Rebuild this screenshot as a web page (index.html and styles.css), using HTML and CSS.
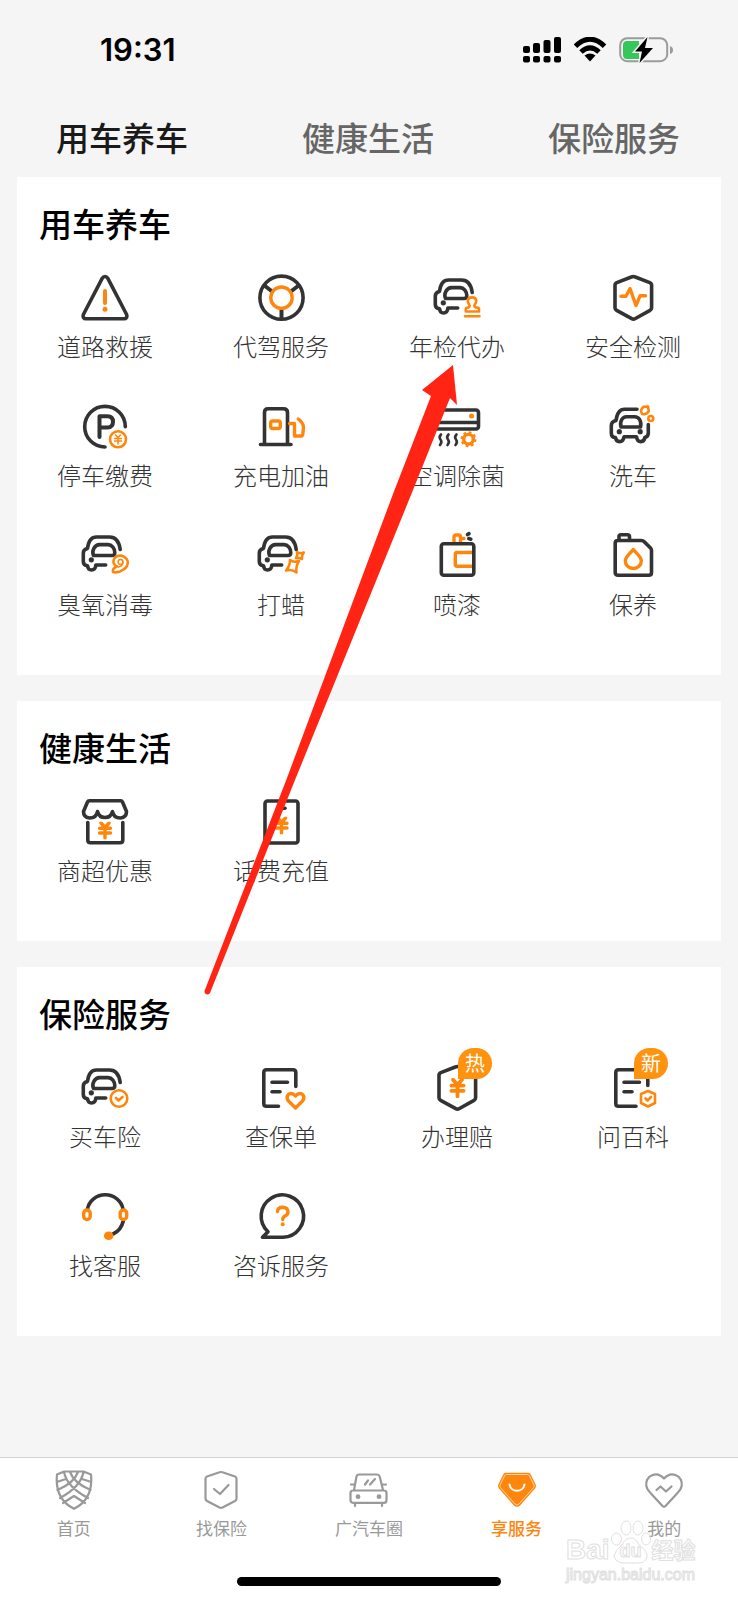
FILE: index.html
```html
<!DOCTYPE html>
<html lang="zh-CN">
<head>
<meta charset="utf-8">
<meta name="viewport" content="width=device-width, initial-scale=1">
<title>享服务</title>
<link rel="stylesheet" href="styles.css">
</head>
<body>
<svg class="defs" aria-hidden="true">
  <symbol id="car" viewBox="0 0 48 48">
    <path class="d" d="M39.2 18.4C38.2 11 34.500 6 28.500 6H15.500C9.500 6 7.300 11 6.500 17.400C3.800 18 2.300 19.500 2.300 22V30.500C2.300 33 4 34.500 6.500 34.700C6.800 37.800 8.500 39 10.500 39C13.200 39 14.600 37.200 14.800 34H24.700"/>
    <path class="d" d="M12.500 24.500C10.500 20 13.500 13.600 18.500 13.600H27C31 13.600 33.800 17.500 33.800 21.500C33.800 23.500 32.800 24.500 31 24.500Z"/>
    <circle class="df" cx="10.300" cy="28.800" r="2.600"/>
  </symbol>
  <symbol id="hex" viewBox="0 0 48 48">
    <path class="d" d="M22.300 3a5 5 0 0 1 4 0L40.800 8.600c1.200.5 1.800 1.300 1.800 2.600v22.600c0 1.200-.5 2-1.600 2.600L26 44.700c-1 .6-2.200.6-3.200 0L7.600 36.400C6.500 35.800 6 35 6 33.800V11.200C6 9.900 6.600 9.100 7.800 8.600z"/>
  </symbol>
  <symbol id="yen" viewBox="0 0 14 18">
    <path class="o" d="M3 1.500L7 6L11 1.500M1.500 6.800H12.500M1.500 11.500H12.500M7 6V16.500"/>
  </symbol>
</svg>

<div class="page">
  <header>
    <div class="status">
      <time class="clock">19:31</time>
      <div class="indicators">
        <svg class="signal" width="38" height="26" viewBox="0 0 38 26" aria-hidden="true">
          <rect x="0" y="9" width="7" height="7" rx="2"/><rect x="10" y="6" width="7" height="10" rx="2"/><rect x="20.500" y="3" width="7" height="13" rx="2"/><rect x="31" y="0" width="7" height="16" rx="2"/>
          <rect x="0" y="19" width="7" height="6.500" rx="2"/><rect x="10" y="19" width="7" height="6.500" rx="2"/><rect x="20.500" y="19" width="7" height="6.500" rx="2"/><rect x="31" y="19" width="7" height="6.500" rx="2"/>
        </svg>
        <svg class="wifi" width="34" height="26" viewBox="0 0 34 26" aria-hidden="true">
          <path d="M2.500 9.200Q17-4.800 31.500 9.200M8 15Q17 6.600 26 15" fill="none" stroke="#000" stroke-width="5"/>
          <path d="M11.500 18.500Q17 14.300 22.500 18.500L17 24.500Z"/>
        </svg>
        <svg class="battery" width="55" height="26" viewBox="0 0 55 26" aria-hidden="true">
          <rect x="1.200" y="1.200" width="47" height="23" rx="7" fill="none" stroke="#9b9b9b" stroke-width="2"/>
          <path d="M51 9q3 1 3 4t-3 4z" fill="#9b9b9b"/>
          <path d="M8 4H20V22H8Q4 22 4 18V8Q4 4 8 4Z" fill="#34c759"/>
          <path d="M28.500 0L16 14.500H23L20.500 26L34 11H26Z" stroke="#f5f5f5" stroke-width="3" paint-order="stroke"/>
        </svg>
      </div>
    </div>
    <nav class="tabs" aria-label="服务分类">
      <button class="tab tab-active" type="button">用车养车</button>
      <button class="tab" type="button">健康生活</button>
      <button class="tab" type="button">保险服务</button>
    </nav>
  </header>

  <main>
    <section class="card">
      <h2>用车养车</h2>
      <div class="grid">
        <a class="item" href="#"><svg class="icon" viewBox="0 0 48 48"><path class="d" d="M21.300 4.200c1.300-2.200 4.100-2.200 5.400 0L45.600 40.500c1 2.200-.2 4.300-2.600 4.300H5c-2.400 0-3.600-2.100-2.600-4.300z"/><path class="o thick" d="M24 17V29"/><circle class="of" cx="24" cy="35.300" r="2.500"/></svg><span>道路救援</span></a>
        <a class="item" href="#"><svg class="icon" viewBox="0 0 48 48"><circle class="d" cx="24.500" cy="23.700" r="21.600"/><path class="d thick" d="M8 12L14.500 17M41 12L34.500 17M24.500 36V44"/><circle class="o" cx="24.500" cy="23.700" r="10.700"/></svg><span>代驾服务</span></a>
        <a class="item" href="#"><svg class="icon" viewBox="0 0 48 48"><use href="#car"/><path class="o thin" d="M32.800 37.500V35.500Q32.800 33.500 34.800 33.500H35.500C38.500 32 34.800 29.800 34.800 27.200C34.800 24.800 36.500 23.400 39 23.400S43.200 24.800 43.200 27.200C43.200 29.800 39.500 32 42.500 33.500H44Q46 33.500 46 35.500V37.500ZM32 42.300H46.500"/></svg><span>年检代办</span></a>
        <a class="item" href="#"><svg class="icon" viewBox="0 0 48 48"><use href="#hex"/><path class="o" d="M12 22.300H17L21 14.500L27 31.500L31 21.800H36.500"/></svg><span>安全检测</span></a>

        <a class="item" href="#"><svg class="icon" viewBox="0 0 48 48"><path class="d" d="M44.300 23.700A20.300 20.300 0 1 0 24 44"/><path class="d thick" d="M18.500 34V13.200H26.500Q32 13.200 32 18.800T26.500 24.400H19"/><circle class="o thin" cx="37" cy="36.300" r="8"/><path class="o hair" d="M34.500 32L37 34.500L39.500 32M33.500 35.500H40.500M33.500 38H40.500M37 34.500V41"/></svg><span>停车缴费</span></a>
        <a class="item" href="#"><svg class="icon" viewBox="0 0 48 48"><path class="d" d="M7.500 41V9.500Q7.500 5.800 11 5.800H26.500Q30.500 5.800 30.500 9.500V41M3.500 41.500H34"/><rect class="o" x="13.700" y="18" width="9.600" height="7.500" rx="2"/><path class="o" d="M32.500 20.500H37.500V33H44.500Q45.500 33 45.800 31L46.500 24.500Q46.500 20 41.300 16"/></svg><span>充电加油</span></a>
        <a class="item" href="#"><svg class="icon" viewBox="0 0 48 48"><rect class="d" x="2.500" y="7" width="43" height="19" rx="2.500"/><path class="d" d="M3 19.500H45"/><circle class="of" cx="38.500" cy="13" r="2.500"/><path class="d thin" d="M8 31.500Q5.500 34 7.500 36.500T7 42M15.500 31.500Q13 34 15 36.500T14.500 42M23.500 31.500Q21 34 23 36.500T22.500 42"/><circle class="o" cx="35.500" cy="36.200" r="4.800"/><circle class="o dots" cx="35.500" cy="36.200" r="6.800"/></svg><span>空调除菌</span></a>
        <a class="item" href="#"><svg class="icon" viewBox="0 0 48 48"><path class="d" d="M28 6.200H15.500C9.500 6.200 7.800 11.500 7 17.500C3.700 18.500 2.300 20 2.300 22.500V30C2.300 33 3.800 34.500 6.500 34.500C6.800 37.500 8.300 38.600 10.500 38.600C13.200 38.600 14.500 37 15 33.700H27.500C28 37 29.300 38.600 31.800 38.600C34 38.600 35.500 37.500 35.800 34.500C38.300 34 39.300 32.500 39.300 30V21.500"/><path class="d" d="M12 24C10.500 18 13.500 13.700 17.500 13.700H25.500C30 13.700 32.800 18 31.500 24Z"/><circle class="df" cx="10.300" cy="28.700" r="2.600"/><circle class="df" cx="31.200" cy="28.700" r="2.600"/><path class="o thin" d="M34.500 3.800L39 3.500L39.800 8.300Q37 12.500 33 10.800Q30.500 7.500 34.500 3.800Z"/><circle class="o thin" cx="41.800" cy="15.500" r="2.500"/></svg><span>洗车</span></a>

        <a class="item" href="#"><svg class="icon" viewBox="0 0 48 48"><use href="#car" y="-1"/><path class="o thin" d="M32 40Q31 36.500 36 34.500Q32 32.500 32.500 28.500Q34 23.500 40 23.500Q45.500 25 46.800 29.500Q47 35 42.500 37.500Q37 41.500 32 40Z"/><circle class="o hair" cx="39.500" cy="30" r="2.400"/><path class="o hair" d="M42 30Q42 34 37.500 35"/></svg><span>臭氧消毒</span></a>
        <a class="item" href="#"><svg class="icon" viewBox="0 0 48 48"><use href="#car" y="-1"/><path class="o thin" d="M33 28Q36.500 31 42 29Q38.500 34.500 39.500 40.500Q35 37 29 38.500Q33 34 33 28Z"/><path class="o thin" d="M40 20Q43 22 46.800 20.500Q44.500 23.500 45 27Q42 25.500 39 26Q41 23.500 40 20Z"/></svg><span>打蜡</span></a>
        <a class="item" href="#"><svg class="icon" viewBox="0 0 48 48"><path class="o" d="M21 10V5Q21 3 23 3H25.500Q27.500 3 27.500 5V10M28.500 6.500H31"/><path class="o" d="M40 20.500H24Q22.300 20.500 22.300 22.500V32.500Q22.300 34.200 24 34.200H40"/><rect class="d" x="8.300" y="11.700" width="32.500" height="31.500" rx="2.500"/><path class="d" d="M34.500 2.500L36 1.600M35.800 6.500L37.800 7.200"/></svg><span>喷漆</span></a>
        <a class="item" href="#"><svg class="icon" viewBox="0 0 48 48"><path class="d" d="M9 8.500H32.500Q34 8.500 35 9.500L41.500 16Q42.500 17 42.500 18.500V40.500Q42.500 43.300 39.700 43.300H9Q6.200 43.300 6.200 40.500V11Q6.200 8.500 9 8.500ZM10 8V4.500Q10 2.700 12 2.700H18.500Q20.500 2.700 20.500 4.500V8"/><path class="o" d="M24.300 17.500C26.500 20.500 32.300 24.500 32.300 29A8 7.500 0 0 1 16.300 29C16.300 24.500 22 20.500 24.300 17.500Z"/></svg><span>保养</span></a>
      </div>
    </section>

    <section class="card">
      <h2>健康生活</h2>
      <div class="grid">
        <a class="item" href="#"><svg class="icon" viewBox="0 0 48 48"><path class="d" d="M8.500 2.800H39.500Q41 2.800 41.500 4L45.500 13.500Q45.500 19.500 39.500 20Q32.500 20 31.500 13.500Q30 19.500 24 19.500T16.500 13.500Q15.500 20 8.500 20Q2.500 19.500 2.500 13.500L6.500 4Q7 2.800 8.500 2.800Z"/><path class="d" d="M6.800 24.500V42Q6.800 44.800 9.500 44.800H39Q41.800 44.800 41.800 42V24.500"/><use href="#yen" x="16.500" y="23.500" width="15" height="18"/></svg><span>商超优惠</span></a>
        <a class="item" href="#"><svg class="icon" viewBox="0 0 48 48"><rect class="d" x="8" y="3" width="33" height="42" rx="2.500"/><path class="d" d="M21.500 10.300H28"/><use href="#yen" x="17" y="18.500" width="15" height="18"/></svg><span>话费充值</span></a>
      </div>
    </section>

    <section class="card">
      <h2>保险服务</h2>
      <div class="grid">
        <a class="item" href="#"><svg class="icon" viewBox="0 0 48 48"><use href="#car"/><circle class="o thin" cx="38" cy="34.500" r="8.300"/><path class="o thin" d="M35 34L37.500 36.500L41.500 33"/></svg><span>买车险</span></a>
        <a class="item" href="#"><svg class="icon" viewBox="0 0 48 48"><path class="d" d="M38.800 22.500V8.500Q38.800 5.800 36 5.800H9.500Q6.800 5.800 6.800 8.500V39.500Q6.800 42.300 9.500 42.300H21.500M15 18.300H30.500M15 27.700H23"/><path class="o" d="M38.500 44L31.500 37Q28.500 33 32 30Q35.500 28.500 38.500 32Q41.500 28.500 45 30Q48.500 33 45.500 37Z"/></svg><span>查保单</span></a>
        <a class="item" href="#"><svg class="icon" viewBox="0 0 48 48"><use href="#hex"/><use href="#yen" x="16" y="14" width="17" height="20"/></svg><b class="badge">热</b><span>办理赔</span></a>
        <a class="item" href="#"><svg class="icon" viewBox="0 0 48 48"><path class="d" d="M38.800 21.500V8.500Q38.800 5.800 36 5.800H9.500Q6.800 5.800 6.800 8.500V39.500Q6.800 42.300 9.500 42.300H27M15 18.300H30.500M15 27.700H23"/><path class="o thin" d="M39 27L46 30V39L39 42.500L32 39V30Z"/><path class="o thin" d="M36.500 34.500L38.500 36.500L42 33"/></svg><b class="badge">新</b><span>问百科</span></a>

        <a class="item" href="#"><svg class="icon" viewBox="0 0 48 48"><path class="d" d="M6.500 16A18 17 0 0 1 42 16M42.300 28Q40 37.500 32 41"/><rect class="o" x="2.700" y="17" width="6.500" height="9.500" rx="3.200"/><rect class="o" x="39.200" y="17" width="6.500" height="9.500" rx="3.200"/><ellipse class="of" cx="27.700" cy="42.700" rx="4.800" ry="4.300"/></svg><span>找客服</span></a>
        <a class="item" href="#"><svg class="icon" viewBox="0 0 48 48"><path class="d" d="M26 44.300A21.200 21.200 0 1 0 11 38.700L5.500 44.300Z"/><path class="o" d="M20.500 18.500Q20.800 14.300 25.700 14.300T31 19Q31 21.500 28 23Q25.700 24.300 25.700 26.500"/><circle class="of" cx="25.700" cy="31.300" r="2"/></svg><span>咨诉服务</span></a>
      </div>
    </section>
  </main>

  <footer>
    <nav class="bottom-nav" aria-label="主导航">
      <a class="nav-item" href="#"><svg class="nav-icon" viewBox="0 0 40 40"><path class="n" d="M10 1.500H29.500L37 4.500Q39.500 29 20 38.800Q.5 29 3 4.500ZM10 2Q13 17 34 28M29.500 2Q26.500 17 6 28M16 2Q20 13 36.500 20M24 2Q20 13 3.500 20M12 9L2.800 12M28 9L37.200 12M9 33L20 26L31 33"/></svg><span>首页</span></a>
      <a class="nav-item" href="#"><svg class="nav-icon" viewBox="0 0 40 40"><path class="n" d="M18.500 2.300Q20 1.700 21.500 2.300L34 6.500Q35.500 7 35.500 8.500V28.500Q35.500 30 34 31L21.500 37.500Q20 38.200 18.500 37.500L6 31Q4.500 30 4.500 28.500V8.500Q4.500 7 6 6.500ZM13 19L19 24L27.500 15"/></svg><span>找保险</span></a>
      <a class="nav-item" href="#"><svg class="nav-icon" viewBox="0 0 40 40"><path class="n" d="M5 20L7.500 6.500Q8 4.500 10 4.500H28Q30 4.500 30.700 6.500L34 20M4 20.500H35Q37.500 20.500 37.500 23V30Q37.500 32.800 35 32.800H4Q1.500 32.800 1.500 30V23Q1.500 20.500 4 20.500ZM2 14.500H5M34 14.500H37M6 33V36M33 33V36M16 14.500L19 10.500M21 14.500L26 9"/><circle class="nf" cx="9" cy="26.700" r="2.400"/><circle class="nf" cx="30" cy="26.700" r="2.400"/></svg><span>广汽车圈</span></a>
      <a class="nav-item nav-active" href="#"><svg class="nav-icon" viewBox="0 0 40 40"><path fill="#ff860d" d="M9 2.700H31Q32.500 2.700 33.500 4L38.700 14.500Q39.500 16.500 38 18.500L23 35.500Q20 38 17 35.500L2 18.500Q.5 16.500 1.300 14.500L6.500 4Q7.500 2.700 9 2.700Z"/><path d="M9.500 4.500H30.500Q31.700 4.500 32.300 5.500L37 15Q37.500 16.500 36.500 17.700L22 34Q20 35.700 18 34L3.500 17.700Q2.500 16.500 3 15L7.700 5.500Q8.300 4.500 9.500 4.500Z" fill="none" stroke="#ffd3a4"/><path d="M12.500 14.500A7.600 7.600 0 0 0 27.500 14.500" fill="none" stroke="#fff" stroke-width="2" stroke-linecap="round"/></svg><span>享服务</span></a>
      <a class="nav-item" href="#"><svg class="nav-icon" viewBox="0 0 40 40"><path class="n" d="M20 8.500Q14.500 2.500 8.500 5Q1.500 8 2.300 16Q3 19.500 6.500 23L18.500 36Q20 37.500 21.500 36L33.500 23Q37 19.500 37.700 16Q38.500 8 31.500 5Q25.500 2.500 20 8.500ZM12.500 20L16.500 16.500L22 21.500L27.500 16.500"/></svg><span>我的</span></a>
    </nav>
    <div class="home-bar"></div>
  </footer>

  <div class="watermark" aria-hidden="true">
    <div class="wm-brand">
      <span class="wm-latin">Bai</span>
      <span class="wm-paw"><svg width="42" height="44" viewBox="0 0 42 44"><ellipse cx="6.500" cy="19" rx="5" ry="6"/><ellipse cx="16" cy="8" rx="5" ry="7"/><ellipse cx="28" cy="8" rx="5" ry="7"/><ellipse cx="36" cy="19" rx="4.500" ry="6"/><path d="M21 18Q26 18 29 25Q38 31 37 37Q35 43 29 43H13Q5 42 4 36Q5 30 12 25Q15 18 21 18Z"/></svg><i>du</i></span>
      <span class="wm-cn">经验</span>
    </div>
    <div class="wm-url">jingyan.baidu.com</div>
  </div>

  <svg class="arrow" width="260" height="634" viewBox="0 0 260 634" aria-hidden="true">
    <path d="M249 2L253 42L246 35L207 132L91 417L6 630A3 3 0 0 1 0.500 628L83 415L189 131L227 33L218 27Z"/>
  </svg>
</div>
</body>
</html>
```
FILE: styles.css
```css
* { box-sizing: border-box; }

body {
  margin: 0;
  background: #f5f5f5;
  color: #000;
  font-family: "Noto Sans CJK SC", sans-serif;
}

a { color: inherit; text-decoration: none; }

.defs { position: absolute; width: 0; height: 0; }

.page {
  position: relative;
  display: flex;
  flex-direction: column;
  min-height: 100vh;
}

/* Status bar */
.status {
  display: flex;
  align-items: center;
  justify-content: space-between;
  height: 100px;
  padding: 0 64px 0 100px;
}

.clock {
  font: 600 31px/36px Inter, "Liberation Sans", sans-serif;
}

.indicators { display: flex; align-items: center; gap: 12px; }

/* Category tabs */
.tabs { display: grid; grid-template-columns: repeat(3, 1fr); }

.tab {
  height: 77px;
  padding: 0 2px 3px 0;
  border: 0;
  background: none;
  color: #666;
  font: 500 33px/36px "Noto Sans CJK SC", sans-serif;
}

.tab-active { color: #1a1a1a; }

/* Service cards */
main {
  display: flex;
  flex-direction: column;
  gap: 26px;
  padding: 0 17px 26px;
}

.card { padding: 28px 0 53px; background: #fff; }

h2 {
  margin: 0 0 33px;
  padding-left: 22px;
  font-size: 33px;
  font-weight: 500;
  line-height: 36px;
}

.grid {
  display: grid;
  grid-template-columns: repeat(4, 1fr);
  row-gap: 39px;
}

.item {
  position: relative;
  display: flex;
  flex-direction: column;
  align-items: center;
  gap: 6px;
  color: #333;
  font-size: 24px;
  font-weight: 300;
  line-height: 36px;
}

.icon { width: 48px; height: 48px; overflow: visible; }

.badge {
  position: absolute;
  top: -16px;
  left: calc(50% + 1px);
  width: 34px;
  height: 31px;
  border-radius: 17px 17px 17px 0;
  background: #ff930f;
  color: #fff;
  font-size: 20px;
  font-weight: 400;
  line-height: 30px;
  text-align: center;
}

/* Icon strokes */
.d, .o, .n { fill: none; stroke-linecap: round; stroke-linejoin: round; }
.d { stroke: #333; stroke-width: 3.6; }
.o { stroke: #ff860d; stroke-width: 3.4; }
.n { stroke: #999; stroke-width: 2.2; }
.thick { stroke-width: 4; }
.thin { stroke-width: 2.6; }
.hair { stroke-width: 1.5; }
.dots { stroke-width: 2.4; stroke-linecap: butt; stroke-dasharray: 2.7 2.64; }
.df { fill: #333; }
.of { fill: #ff860d; }
.nf { fill: #999; }

/* Bottom navigation */
footer {
  margin-top: auto;
  padding-bottom: 14px;
  border-top: 1px solid #d2d2d2;
  background: #fff;
}

.bottom-nav {
  display: grid;
  grid-template-columns: repeat(5, 1fr);
  padding-top: 12px;
}

.nav-item {
  display: flex;
  flex-direction: column;
  align-items: center;
  gap: 7px;
  color: #999;
  font-size: 17px;
  line-height: 22px;
}

.nav-active { color: #ff860d; font-weight: 500; }

.nav-icon { width: 40px; height: 40px; }

.home-bar {
  width: 264px;
  height: 9px;
  margin: 38px auto 0;
  border-radius: 5px;
  background: #000;
}

/* Overlays */
.arrow {
  position: absolute;
  top: 363px;
  left: 204px;
  fill: #ff2414;
  pointer-events: none;
}

.watermark {
  position: absolute;
  right: 40px;
  bottom: 14px;
  width: 132px;
  color: #fff;
  -webkit-text-stroke: 1px #e0e0e0;
  pointer-events: none;
}

.wm-brand {
  display: flex;
  align-items: flex-end;
  height: 44px;
  font-weight: 700;
}

.wm-latin { font: 700 28px/28px "Liberation Sans", sans-serif; }

.wm-paw { position: relative; height: 44px; }

.wm-paw svg { fill: none; stroke: #e0e0e0; }

.wm-paw i {
  position: absolute;
  right: 0;
  bottom: 2px;
  left: 0;
  font: 700 18px/22px "Liberation Sans", sans-serif;
  text-align: center;
}

.wm-cn { font-size: 22px; line-height: 32px; }

.wm-url { font: 16px/22px "Liberation Sans", sans-serif; }
```
